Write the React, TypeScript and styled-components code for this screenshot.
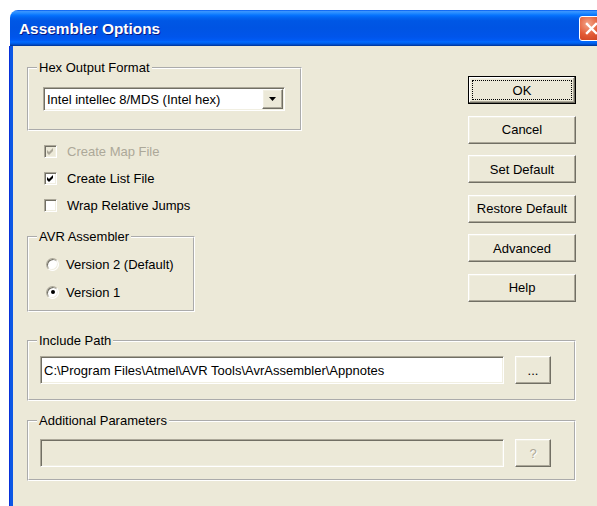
import React from "react";
import styled, { createGlobalStyle, css } from "styled-components";

const GlobalStyle = createGlobalStyle`
  html, body {
    margin: 0;
    padding: 0;
    background: #fff;
    overflow: hidden;
  }
  body {
    font-family: "Liberation Sans", Arial, sans-serif;
    font-size: 13px;
    color: #000;
  }
`;

// classic 3D edges
const sunken = css`
  border-style: solid;
  border-width: 1px;
  border-color: #aca899 #ffffff #ffffff #aca899;
  box-shadow: inset 1px 1px 0 #716f64, inset -1px -1px 0 #f1efe2;
`;

const raised = css`
  border-style: solid;
  border-width: 1px;
  border-color: #ffffff #716f64 #716f64 #ffffff;
  box-shadow: inset -1px -1px 0 #aca899, inset 1px 1px 0 #f1efe2;
`;

const Window = styled.div`
  margin: 10px 0 0 10px;
  width: 600px;
`;

const TitleBar = styled.div`
  height: 36px;
  display: flex;
  align-items: center;
  padding: 0 6px 0 9px;
  border-radius: 8px 8px 0 0;
  background: linear-gradient(
    to bottom,
    #0058ee 0%,
    #3a93ff 4%,
    #288eff 8%,
    #127dff 12%,
    #036ffc 16%,
    #0262ee 22%,
    #0057e5 30%,
    #0054e3 50%,
    #0055eb 75%,
    #005bf5 84%,
    #026afe 88%,
    #0062ef 92%,
    #0052d6 95%,
    #0040ab 98%,
    #003092 100%
  );
`;

const Title = styled.span`
  flex: 1;
  padding-top: 2px;
  color: #fff;
  font-weight: bold;
  font-size: 15.4px;
  text-shadow: 1px 1px 0 #0a1883;
`;

const CloseButton = styled.div`
  box-sizing: border-box;
  width: 25px;
  height: 25px;
  border: 1px solid #fff;
  border-radius: 3px;
  background: radial-gradient(circle at 35% 30%, #f3a68a 0%, #e35b36 50%, #c4391a 100%);
  display: flex;
  align-items: center;
  justify-content: center;
`;

const Frame = styled.div`
  height: 470px;
  background: #ece9d8;
  border-left: 3px solid #0b57e5;
  box-shadow: -1px 0 0 #0831d9;
  padding: 14px 0 0 14px;
`;

const Content = styled.div`
  width: 549px;
`;

const TopRow = styled.div`
  display: flex;
  justify-content: space-between;
  align-items: flex-start;
`;

const LeftColumn = styled.div`
  width: 275px;
  display: flex;
  flex-direction: column;
  align-items: flex-start;
`;

const Group = styled.fieldset<{ $width?: number; $top?: number }>`
  box-sizing: border-box;
  margin: ${(p) => p.$top ?? 0}px 0 0 0;
  padding: 0;
  min-width: 0;
  width: ${(p) => (p.$width ? `${p.$width}px` : "100%")};
  border: 2px groove #ffffff;
`;

const Legend = styled.legend`
  margin-left: 8px;
  padding: 0 2px;
  line-height: 16px;
  background: #ece9d8;
`;

const GroupBody = styled.div<{ $pad: string }>`
  padding: ${(p) => p.$pad};
`;

const Combo = styled.div`
  box-sizing: border-box;
  width: 242px;
  height: 24px;
  ${sunken};
  background: #fff;
  display: flex;
  padding: 1px;
`;

const ComboText = styled.span`
  flex: 1;
  display: flex;
  align-items: center;
  padding-left: 2px;
  white-space: nowrap;
`;

const ComboArrow = styled.span`
  box-sizing: border-box;
  width: 21px;
  ${raised};
  background: #ece9d8;
  display: flex;
  align-items: center;
  justify-content: center;
`;

const OptionList = styled.div<{ $top: number }>`
  margin-top: ${(p) => p.$top}px;
  display: flex;
  flex-direction: column;
`;

const OptionRow = styled.label<{ $height: number; $gap: number; $indent: number; $disabled?: boolean }>`
  height: ${(p) => p.$height}px;
  display: flex;
  align-items: center;
  gap: ${(p) => p.$gap}px;
  padding-left: ${(p) => p.$indent}px;
  color: ${(p) => (p.$disabled ? "#aca899" : "#000")};
  white-space: nowrap;
`;

const CheckBox = styled.span<{ $disabled?: boolean }>`
  box-sizing: border-box;
  width: 13px;
  height: 13px;
  ${sunken};
  background: ${(p) => (p.$disabled ? "#ece9d8" : "#fff")};
  color: ${(p) => (p.$disabled ? "#aca899" : "#000")};
  display: flex;
  align-items: center;
  justify-content: center;
`;

const RadioCircle = styled.span`
  box-sizing: border-box;
  width: 13px;
  height: 13px;
  border-radius: 50%;
  border: 1px solid;
  border-color: #aca899 #ffffff #ffffff #aca899;
  box-shadow: inset 1px 1px 0 #716f64, inset -1px -1px 0 #f1efe2;
  background: #fff;
  display: flex;
  align-items: center;
  justify-content: center;
`;

const RadioDot = styled.span`
  width: 4px;
  height: 4px;
  border-radius: 50%;
  background: #000;
`;

const ButtonColumn = styled.div`
  padding-top: 16px;
  display: flex;
  flex-direction: column;
  gap: 11.5px;
`;

const PushButton = styled.div<{ $default?: boolean; $width: number; $height: number; $disabled?: boolean }>`
  box-sizing: border-box;
  width: ${(p) => p.$width}px;
  height: ${(p) => p.$height}px;
  background: #ece9d8;
  ${raised};
  color: ${(p) => (p.$disabled ? "#aca899" : "#000")};
  text-shadow: ${(p) => (p.$disabled ? "1px 1px 0 #fff" : "none")};
  display: flex;
  padding: 3px;
  ${(p) =>
    p.$default &&
    css`
      border: 1px solid #000;
      box-shadow: inset -1px -1px 0 #716f64, inset 1px 1px 0 #fff,
        inset -2px -2px 0 #aca899, inset 2px 2px 0 #f1efe2;
    `}
`;

const ButtonLabel = styled.span<{ $focused?: boolean }>`
  flex: 1;
  display: flex;
  align-items: center;
  justify-content: center;
  border: 1px ${(p) => (p.$focused ? "dotted #000" : "solid transparent")};
`;

const FieldRow = styled.div`
  display: flex;
  align-items: center;
  gap: 11px;
`;

const TextField = styled.div<{ $disabled?: boolean }>`
  box-sizing: border-box;
  flex: 1;
  height: 28px;
  ${sunken};
  background: ${(p) => (p.$disabled ? "#ece9d8" : "#fff")};
  display: flex;
  align-items: center;
  padding: 0 3px;
  white-space: nowrap;
  overflow: hidden;
`;

const Check = () => (
  <svg width="7" height="7" viewBox="0 0 7 7">
    <polygon points="0,2 2,4 6,0 6,3 2,7 0,5" fill="currentColor" />
  </svg>
);

interface CheckOptionProps {
  label: string;
  checked?: boolean;
  disabled?: boolean;
}

const CheckOption = ({ label, checked, disabled }: CheckOptionProps) => (
  <OptionRow $height={27} $gap={10} $indent={17} $disabled={disabled}>
    <CheckBox $disabled={disabled}>{checked && <Check />}</CheckBox>
    {label}
  </OptionRow>
);

const RadioOption = ({ label, checked }: { label: string; checked?: boolean }) => (
  <OptionRow $height={28} $gap={7} $indent={17}>
    <RadioCircle>{checked && <RadioDot />}</RadioCircle>
    {label}
  </OptionRow>
);

const buttons = ["OK", "Cancel", "Set Default", "Restore Default", "Advanced", "Help"];

export default function App() {
  return (
    <>
      <GlobalStyle />
      <Window>
        <TitleBar>
          <Title>Assembler Options</Title>
          <CloseButton>
            <svg width="13" height="13" viewBox="0 0 13 13">
              <path d="M2 2 L11 11 M11 2 L2 11" stroke="#fff" strokeWidth="2.4" strokeLinecap="square" />
            </svg>
          </CloseButton>
        </TitleBar>
        <Frame>
          <Content>
            <TopRow>
              <LeftColumn>
                <Group $width={275}>
                  <Legend>Hex Output Format</Legend>
                  <GroupBody $pad="11px 0 18px 14px">
                    <Combo>
                      <ComboText>Intel intellec 8/MDS (Intel hex)</ComboText>
                      <ComboArrow>
                        <svg width="7" height="4" viewBox="0 0 7 4">
                          <polygon points="0,0 7,0 3.5,4" fill="#000" />
                        </svg>
                      </ComboArrow>
                    </Combo>
                  </GroupBody>
                </Group>

                <OptionList $top={7}>
                  <CheckOption label="Create Map File" checked disabled />
                  <CheckOption label="Create List File" checked />
                  <CheckOption label="Wrap Relative Jumps" />
                </OptionList>

                <Group $width={168} $top={10}>
                  <Legend>AVR Assembler</Legend>
                  <GroupBody $pad="5px 0 4px 0">
                    <RadioOption label="Version 2 (Default)" />
                    <RadioOption label="Version 1" checked />
                  </GroupBody>
                </Group>
              </LeftColumn>

              <ButtonColumn>
                {buttons.map((b, i) => (
                  <PushButton key={b} $width={108} $height={28} $default={i === 0}>
                    <ButtonLabel $focused={i === 0}>{b}</ButtonLabel>
                  </PushButton>
                ))}
              </ButtonColumn>
            </TopRow>

            <Group $top={21}>
              <Legend>Include Path</Legend>
              <GroupBody $pad="7px 23px 15px 11px">
                <FieldRow>
                  <TextField>C:\Program Files\Atmel\AVR Tools\AvrAssembler\Appnotes</TextField>
                  <PushButton $width={36} $height={28}>
                    <ButtonLabel>...</ButtonLabel>
                  </PushButton>
                </FieldRow>
              </GroupBody>
            </Group>

            <Group $top={12}>
              <Legend>Additional Parameters</Legend>
              <GroupBody $pad="10px 23px 12px 11px">
                <FieldRow>
                  <TextField $disabled />
                  <PushButton $width={36} $height={28} $disabled>
                    <ButtonLabel>?</ButtonLabel>
                  </PushButton>
                </FieldRow>
              </GroupBody>
            </Group>
          </Content>
        </Frame>
      </Window>
    </>
  );
}
